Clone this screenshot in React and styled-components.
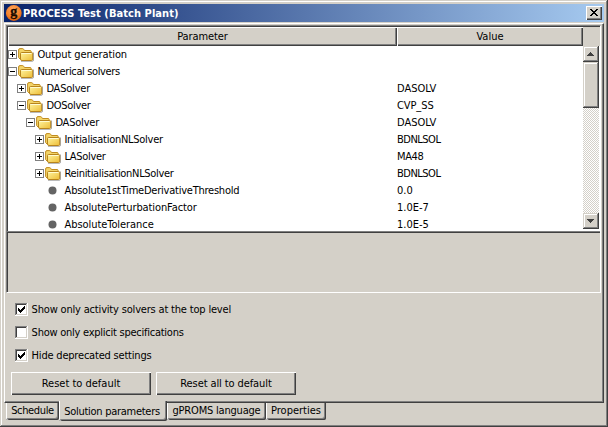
import React from "react";
import styled, { createGlobalStyle, css } from "styled-components";

const face = "#d4d0c8";
const shade = "#808080";
const dark = "#404040";

const Global = createGlobalStyle`
  * { box-sizing: border-box; }
  body { margin: 0; background: ${face}; }
  button { font: inherit; color: inherit; border-radius: 0; padding: 0; margin: 0; }
`;

const raised = css`
  background: ${face};
  box-shadow: inset 1px 1px #fff, inset -1px -1px ${dark}, inset -2px -2px ${shade};
`;

const raisedSoft = css`
  background: ${face};
  box-shadow: inset -1px -1px ${dark}, inset 1px 1px ${face}, inset -2px -2px ${shade}, inset 2px 2px #fff;
`;

const Win = styled.div`
  width: 608px;
  height: 427px;
  padding: 4px;
  display: flex;
  flex-direction: column;
  ${raisedSoft}
  font: 11px/17px "DejaVu Sans Condensed", "DejaVu Sans", sans-serif;
  font-stretch: condensed;
  color: #000;
  overflow: hidden;
`;

const Text = styled.span`
  white-space: nowrap;
  letter-spacing: ${(p) => p.$ls || 0}px;
`;

const TitleBar = styled.header`
  height: 18px;
  flex: none;
  display: flex;
  align-items: center;
  padding: 0 2px 0 1px;
  background: linear-gradient(90deg, #0a246a, #a6caf0);
  color: #fff;
  font-weight: bold;
`;

const TitleText = styled(Text)`
  flex: 1;
  margin-left: 1px;
`;

const Logo = styled.svg`
  flex: none;
  width: 17px;
  height: 18px;
  overflow: visible;
`;

const CloseButton = styled.button`
  width: 16px;
  height: 14px;
  border: 0;
  display: flex;
  ${raised}
`;

const Pane = styled.main`
  margin-top: 1px;
  height: 380px;
  flex: none;
  padding: 1px 2px 0 1px;
  border: 1px solid;
  border-color: #fff ${dark} ${dark} #fff;
  box-shadow: inset -1px -1px ${shade};
`;

const Split = styled.section`
  height: 268px;
  width: 595px;
  border: 1px solid;
  border-color: ${shade} #fff #fff ${shade};
`;

const TablePane = styled.div`
  height: 205px;
  border-left: 1px solid ${dark};
  border-top: 1px solid ${dark};
  display: grid;
  grid-template-columns: 575px 17px;
  grid-template-rows: 19px 185px;
`;

const HeaderRow = styled.div`
  display: grid;
  grid-template-columns: 389px 186px;
`;

const HeaderCell = styled.div`
  text-align: center;
  padding-top: 1px;
  ${raised}
`;

const HeaderCorner = styled.div`
  background: ${face};
`;

const Rows = styled.div`
  background: #fff;
  overflow: hidden;
`;

const Row = styled.div`
  height: 17px;
  display: grid;
  grid-template-columns: 389px 186px;
`;

const NameCell = styled.div`
  display: flex;
  align-items: center;
  padding-left: ${(p) => p.$depth * 9}px;
`;

const Toggle = styled.svg`
  flex: none;
  width: 9px;
  height: 9px;
  margin-bottom: 1px;
  shape-rendering: crispEdges;
`;

const Folder = styled.svg`
  flex: none;
  width: 16px;
  height: 16px;
  margin: 1px 3.4px 0 1px;
`;

const Bullet = styled.svg`
  flex: none;
  width: 9px;
  height: 9px;
  margin: 0 7.6px 0 4px;
`;

const ScrollGutter = styled.div`
  background: #fff;
  padding: 0 1px 2px 0;
`;

const Scroll = styled.div`
  height: 183px;
  display: flex;
  flex-direction: column;
  background: repeating-conic-gradient(${face} 0 25%, #fff 0 50%) 0 0 / 2px 2px;
`;

const ScrollButton = styled.button`
  width: 16px;
  height: 16px;
  border: 0;
  display: flex;
  ${raisedSoft}
`;

const Thumb = styled.div`
  height: 46px;
  ${raisedSoft}
`;

const Track = styled.div`
  flex: 1;
`;

const Details = styled.div`
  height: 61px;
  border-top: 1px solid ${shade};
  box-shadow: inset 1px 1px ${dark};
  background: ${face};
`;

const Options = styled.div`
  display: flex;
  flex-direction: column;
  gap: 6px;
  padding: 8px 0 0 9px;
`;

const Option = styled.label`
  height: 17px;
  display: flex;
  align-items: center;
  gap: 3.6px;
`;

const Box = styled.svg`
  width: 13px;
  height: 13px;
  shape-rendering: crispEdges;
`;

const Actions = styled.div`
  display: flex;
  gap: 5px;
  padding: 8px 0 0 5px;
`;

const PushButton = styled.button`
  width: 140px;
  height: 23px;
  border: 0;
  ${raised}
`;

const Tabs = styled.nav`
  height: 20px;
  display: flex;
  padding-left: 2px;
`;

const Tab = styled.div`
  width: ${(p) => p.$w}px;
  height: ${(p) => (p.$active ? 20 : 17)}px;
  flex: none;
  padding: ${(p) => (p.$active ? "3px 2px 0 0" : "0")};
  line-height: 16px;
  text-align: center;
  margin-top: ${(p) => (p.$active ? -2 : 0)}px;
  background: ${face};
  border-radius: 0 0 2px 2px;
  box-shadow: inset 1px 0 #fff, inset -1px -1px ${dark}, inset -2px -2px ${shade};
`;

const rows = [
  [0, "+", "Output generation", -0.1, "", 0],
  [0, "-", "Numerical solvers", -0.38, "", 0],
  [1, "+", "DASolver", -0.2, "DASOLV", 0],
  [1, "-", "DOSolver", -0.3, "CVP_SS", -0.1],
  [2, "-", "DASolver", -0.2, "DASOLV", 0],
  [3, "+", "InitialisationNLSolver", -0.27, "BDNLSOL", -0.5],
  [3, "+", "LASolver", -0.3, "MA48", -0.4],
  [3, "+", "ReinitialisationNLSolver", -0.31, "BDNLSOL", -0.5],
  [4, "", "Absolute1stTimeDerivativeThreshold", -0.23, "0.0", 0],
  [4, "", "AbsolutePerturbationFactor", -0.1, "1.0E-7", 0],
  [4, "", "AbsoluteTolerance", -0.07, "1.0E-5", 0],
];

function ToggleIcon({ open }) {
  return (
    <Toggle viewBox="0 0 9 9">
      <path d="M0 0h9v9H0z" fill={shade} />
      <path d="M1 1h7v7H1z" fill="#fff" />
      <path d={open ? "M2 4h5v1H2z" : "M2 4h5v1H2zM4 2h1v5H4z"} fill="#000" />
    </Toggle>
  );
}

function FolderIcon() {
  return (
    <Folder viewBox="0 0 16 16">
      <path d="M3 14.3h11.3q1.2 0 1.2-1.2V5.5" fill="none" stroke="#666" strokeOpacity=".55" />
      <path d="M.6 10.5V3Q.6 1.6 2 1.6h2.6q.7 0 1.1.7l.7 1.2h5.7q1.1 0 1.1 1.2V12H2z" fill="#f3d468" stroke="#c08c20" />
      <path d="M3.4 5.5h10.1q1.2 0 1.2 1.1v5.6q0 1.3-1.3 1.3H4q-1.5 0-1.5-1.4V6.5q0-1 .9-1z" fill="url(#folderFill)" stroke="#b8841c" />
      <path d="M3.5 6.5h10" stroke="#fffbd0" />
    </Folder>
  );
}

function CheckBox({ checked }) {
  return (
    <Box viewBox="0 0 13 13">
      <path d="M0 0h13v13H0z" fill="#fff" />
      <path d="M0 0h12v1H1v11H0z" fill={shade} />
      <path d="M1 1h10v1H2v9H1z" fill={dark} />
      <path d="M11 1h1v11H1v-1h10z" fill={face} />
      {checked && <path d="M3 5h1v1h1v1h1V6h1V5h1V4h1V3h1v3H9v1H8v1H7v1H6v1H5V9H4V8H3z" fill="#000" />}
    </Box>
  );
}

function LogoIcon() {
  return (
    <Logo viewBox="0 0 17 18">
      <defs>
        <radialGradient id="logoFill" cx=".45" cy=".3" r=".75">
          <stop offset="0" stopColor="#ffa860" />
          <stop offset=".65" stopColor="#f58026" />
          <stop offset="1" stopColor="#cc5610" />
        </radialGradient>
        <linearGradient id="folderFill" x1="0" y1="0" x2="1" y2="1">
          <stop offset="0" stopColor="#fff5a0" />
          <stop offset="1" stopColor="#edbc35" />
        </linearGradient>
      </defs>
      <circle cx="8.8" cy="9" r="7.9" fill="url(#logoFill)" />
      <text x="8.7" y="11.5" textAnchor="middle" fontFamily="Liberation Serif" fontWeight="bold" fontSize="14" fill="#180a00" stroke="#180a00" strokeWidth=".3">g</text>
    </Logo>
  );
}

export default function App() {
  return (
    <Win>
      <Global />
      <TitleBar>
        <LogoIcon />
        <TitleText $ls={0.06}>PROCESS Test (Batch Plant)</TitleText>
        <CloseButton>
          <svg width="16" height="14" shapeRendering="crispEdges">
            <path d="M4 3h2v1h1v1h2V4h1V3h2v1h-1v1h-1v1H9v1h1v1h1v1h1v1h-2V9H9V8H7v1H6v1H4V9h1V8h1V7h1V6H6V5H5V4H4z" />
          </svg>
        </CloseButton>
      </TitleBar>
      <Pane>
        <Split>
          <TablePane>
            <HeaderRow>
              <HeaderCell><Text $ls={-0.1}>Parameter</Text></HeaderCell>
              <HeaderCell><Text>Value</Text></HeaderCell>
            </HeaderRow>
            <HeaderCorner />
            <Rows>
              {rows.map(([depth, state, name, nameLs, value, valueLs]) => (
                <Row key={name + depth}>
                  <NameCell $depth={depth}>
                    {state ? (
                      <>
                        <ToggleIcon open={state === "-"} />
                        <FolderIcon />
                      </>
                    ) : (
                      <Bullet viewBox="0 0 9 9"><circle cx="4.5" cy="4.5" r="4" fill="#646464" /></Bullet>
                    )}
                    <Text $ls={nameLs}>{name}</Text>
                  </NameCell>
                  <Text $ls={valueLs}>{value}</Text>
                </Row>
              ))}
            </Rows>
            <ScrollGutter>
              <Scroll>
                <ScrollButton><svg width="16" height="16" shapeRendering="crispEdges"><path d="M7 6h1v1h1v1h1v1h1v1H4V9h1V8h1V7h1z" fill={dark} /></svg></ScrollButton>
                <Thumb />
                <Track />
                <ScrollButton><svg width="16" height="16" shapeRendering="crispEdges"><path d="M4 6h7v1h-1v1H9v1H8v1H7V9H6V8H5V7H4z" fill={dark} /></svg></ScrollButton>
              </Scroll>
            </ScrollGutter>
          </TablePane>
          <Details />
        </Split>
        <Options>
          <Option><CheckBox checked /><Text $ls={-0.18}>Show only activity solvers at the top level</Text></Option>
          <Option><CheckBox /><Text $ls={-0.25}>Show only explicit specifications</Text></Option>
          <Option><CheckBox checked /><Text $ls={-0.2}>Hide deprecated settings</Text></Option>
        </Options>
        <Actions>
          <PushButton><Text>Reset to default</Text></PushButton>
          <PushButton><Text $ls={-0.1}>Reset all to default</Text></PushButton>
        </Actions>
      </Pane>
      <Tabs>
        <Tab $w={53}><Text $ls={-0.35}>Schedule</Text></Tab>
        <Tab $w={108} $active><Text $ls={-0.27}>Solution parameters</Text></Tab>
        <Tab $w={99}><Text $ls={-0.2}>gPROMS language</Text></Tab>
        <Tab $w={60}><Text>Properties</Text></Tab>
      </Tabs>
    </Win>
  );
}
